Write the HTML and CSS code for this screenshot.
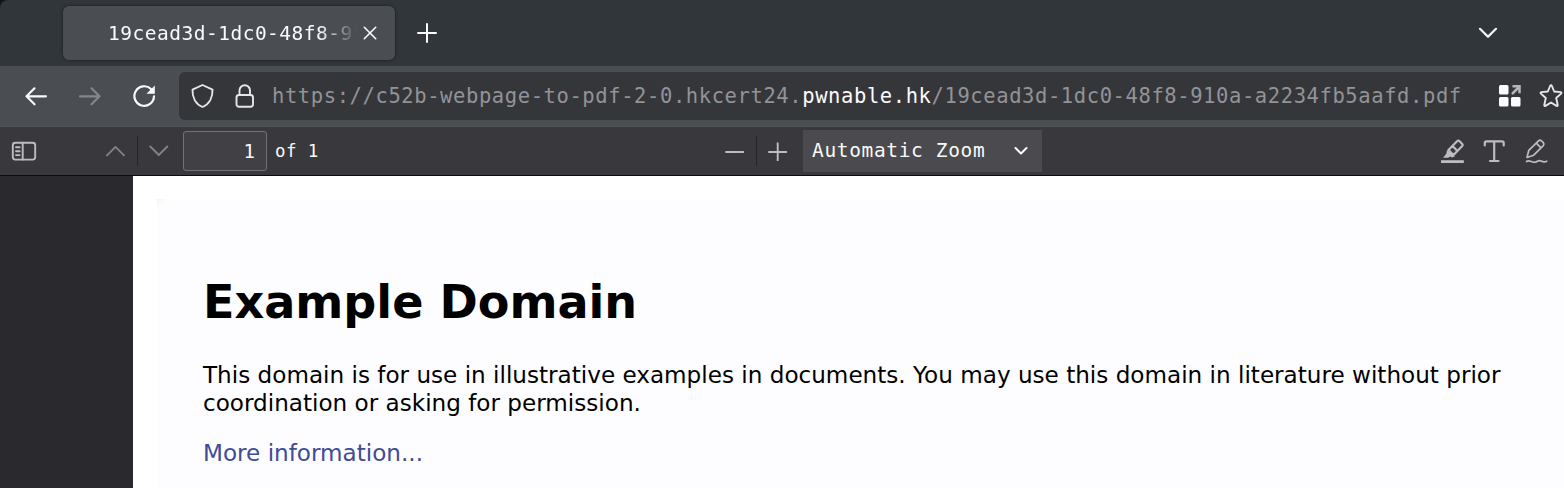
FILE: index.html
```html
<!DOCTYPE html>
<html lang="en">
<head>
<meta charset="utf-8">
<title>19cead3d-1dc0-48f8-910a-a2234fb5aafd.pdf</title>
<link rel="stylesheet" href="styles.css">
</head>
<body>
<div class="tabbar">
  <div class="tab">
    <span class="tab-title">19cead3d-1dc0-48f8-91</span>
    <svg class="tab-close" width="16" height="16" viewBox="0 0 16 16"><path d="M2.300 2.300l11.400 11.400M13.700 2.300L2.300 13.700"/></svg>
  </div>
  <svg class="new-tab" width="20" height="20" viewBox="0 0 20 20"><path d="M10 1v18M1 10h18"/></svg>
  <svg class="all-tabs" width="20" height="12" viewBox="0 0 20 12"><path d="M2 1.800l8 8 8-8"/></svg>
</div>
<div class="navbar">
  <svg class="nav-icon back" width="24" height="24" viewBox="0 0 24 24"><path d="M22 12.300H2.500M10.500 4.300l-8 8 8 8"/></svg>
  <svg class="nav-icon forward" width="24" height="24" viewBox="0 0 24 24"><path d="M1 12.300h19.500M12.500 4.300l8 8-8 8"/></svg>
  <svg class="nav-icon reload" width="24" height="24" viewBox="0 0 24 24"><path d="M22 12.300A9.800 9.800 0 1 1 19 5"/><path class="solid" d="M22.800 1.500v8.300h-8.300z"/></svg>
  <div class="urlbar">
    <svg class="shield" width="24" height="26" viewBox="0 0 24 26"><path d="M12.500 2L22.500 6.700C22.800 14 19.500 21 12.500 24 5.500 21 2.200 14 2.500 6.700z"/></svg>
    <svg class="lock" width="20" height="26" viewBox="0 0 20 26"><path d="M4.500 12V7.500a5 5 0 0 1 10.500 0V12"/><rect x="1.500" y="12" width="16.500" height="11.800" rx="2.500"/></svg>
    <span class="url">https://c52b-webpage-to-pdf-2-0.hkcert24.<b>pwnable.hk</b>/19cead3d-1dc0-48f8-910a-a2234fb5aafd.pdf</span>
    <svg class="apps" width="22" height="22" viewBox="0 0 22 22"><rect x="0" y="0" width="9.500" height="9.500" rx="1.500"/><rect x="0" y="12" width="9.500" height="9.500" rx="1.500"/><rect x="12" y="12" width="9.500" height="9.500" rx="1.500"/><path d="M13 9l7-7M13.500 1.300h7v7"/></svg>
    <svg class="star" width="26" height="26" viewBox="0 0 26 26"><path d="M13 2.300q.6 0 .9.700l2.300 5.500 6.500.6q1.300.3.400 1.500l-4.900 4.400 1.500 7q0 1.300-1.200.9L13 19.500l-5.500 3.400q-1.200.4-1.200-.9l1.500-7-4.900-4.400q-.9-1.200.4-1.500l6.500-.6L12.100 3q.3-.7.900-.7z"/></svg>
  </div>
</div>
<div class="pdfbar">
  <svg class="tool sidebar" width="26" height="20" viewBox="0 0 26 20"><rect x="1.800" y="1.800" width="22.400" height="16.800" rx="2.500"/><path d="M11.700 1.800v16.800M5 6.300h3.600M5 10.200h3.600M5 14.100h3.600"/></svg>
  <svg class="tool prev" width="20" height="12" viewBox="0 0 20 12"><path d="M1 10.300L9.500 1.800l8.500 8.500"/></svg>
  <i class="sep sep-page"></i>
  <svg class="tool next" width="20" height="12" viewBox="0 0 20 12"><path d="M1.300 1.500L9.800 10l8.500-8.500"/></svg>
  <span class="page-number">1</span>
  <span class="page-count">of 1</span>
  <svg class="tool minus" width="20" height="20" viewBox="0 0 20 20"><path d="M1 11h17.300"/></svg>
  <i class="sep sep-zoom"></i>
  <svg class="tool plus" width="20" height="20" viewBox="0 0 20 20"><path d="M1 11h17.300M9.700 2.300v17.400"/></svg>
  <div class="zoom"><span>Automatic Zoom</span><svg width="14" height="9" viewBox="0 0 14 9"><path d="M1.500 2L7 7.500 12.500 2"/></svg></div>
  <div class="editors">
    <svg class="tool" width="24" height="26" viewBox="0 0 24 26"><path class="fill" d="M1 22.200h22.800V25H1z"/><path class="fill" d="M7 12l8 6.300-3 1.200-1.800-1-2 1.200H3l3.300-4z"/><path class="marker" d="M8.500 12L17 3.300q1.300-1.200 2.600 0l2.400 2.400q1.200 1.300 0 2.600L13.500 17zM12.500 8l5 5"/></svg>
    <svg class="tool" width="22" height="26" viewBox="0 0 22 26"><path class="letter" d="M1.800 7.500V5q0-1.700 1.700-1.700h15.500q1.700 0 1.700 1.700v2.500M11.200 3.300V23M7 23h8.500"/></svg>
    <svg class="tool" width="24" height="26" viewBox="0 0 24 26"><path class="thin" d="M4.800 12.300L14.500 2.800q1.500-1.200 3 0l1.800 1.800q1.200 1.500 0 3L9.700 17.200 3 19.500zM12.300 5.200l4.500 4.500M2.500 23.500c3-2.200 5.500 1.500 8.500.7s3.500-2.500 6-1.200 3.500 1.500 5.700.2"/></svg>
  </div>
</div>
<div class="viewer">
  <div class="page">
    <div class="sheet">
      <h1>Example Domain</h1>
      <p>This domain is for use in illustrative examples in documents. You may use this domain in literature without prior<br>coordination or asking for permission.</p>
      <p><a class="more">More information...</a></p>
    </div>
  </div>
</div>
</body>
</html>
```
FILE: styles.css
```css
* { box-sizing: border-box; }
body {
  margin: 0;
  width: 1564px;
  height: 488px;
  overflow: hidden;
  display: flex;
  flex-direction: column;
  background: #111416;
  font-family: "DejaVu Sans Mono", "Liberation Mono", monospace;
}
svg { flex: none; fill: none; stroke: #fbfbfe; stroke-width: 2; stroke-linecap: round; stroke-linejoin: round; }

.tabbar {
  height: 66px;
  flex: none;
  display: flex;
  align-items: center;
  padding-left: 63px;
  background: #31363a;
  border-top-left-radius: 8px;
}
.tab {
  display: flex;
  align-items: center;
  width: 332px;
  height: 54px;
  padding-left: 45px;
  border-radius: 6px;
  background: #4a4d51;
  box-shadow: 0 0 3px rgba(0, 0, 0, .55);
}
.tab-title {
  width: 248px;
  white-space: nowrap;
  color: #fbfbfe;
  font-size: 19.500px;
  letter-spacing: .5px;
  -webkit-mask-image: linear-gradient(to right, #000 210px, transparent 250px);
  mask-image: linear-gradient(to right, #000 210px, transparent 250px);
}
.tab-close { margin-left: 6px; stroke-width: 1.600; }
.new-tab { margin-left: 22px; }
.all-tabs { margin-left: auto; margin-right: 66px; stroke-width: 2.200; }

.navbar {
  height: 60px;
  flex: none;
  display: flex;
  align-items: center;
  padding-left: 24px;
  background: #4a4d51;
}
.nav-icon { stroke-width: 2.200; }
.forward { margin-left: 31px; stroke: #85878a; }
.reload { margin-left: 29px; }
.reload .solid { fill: #fbfbfe; stroke: none; }
.urlbar {
  flex: 1;
  min-width: 0;
  height: 48px;
  margin-left: 23px;
  padding-left: 11px;
  display: flex;
  align-items: center;
  overflow: hidden;
  border-radius: 6px 0 0 6px;
  background: #35363a;
}
.shield, .lock, .star { stroke-width: 1.900; stroke: #e6e6e8; }
.lock { margin-left: 21px; }
.url {
  flex: none;
  width: 1210px;
  margin-left: 17px;
  white-space: nowrap;
  color: #929397;
  font-size: 20.500px;
  letter-spacing: .59px;
}
.url b { font-weight: 400; color: #fbfbfe; }
.apps { margin-left: 17px; }
.apps rect { fill: #fbfbfe; stroke: none; }
.apps path { stroke: #b5b5b8; stroke-width: 2.500; stroke-linecap: butt; stroke-linejoin: miter; }
.star { margin-left: 17px; }

.pdfbar {
  height: 50px;
  flex: none;
  display: flex;
  align-items: center;
  padding-left: 11px;
  background: #38383d;
  border-top: 1px solid #515558;
  border-bottom: 1px solid #0c0c0d;
  color: #f9f9fa;
}
.tool { stroke: #bdbdc0; stroke-width: 1.900; }
.tool .fill { fill: #bdbdc0; stroke: none; }
.tool .thin { stroke-width: 1.700; }
.tool .marker, .tool .letter { stroke-width: 2.200; }
.prev { margin-left: 69px; }
.prev, .next { stroke: #828286; }
.sep { width: 1px; height: 30px; background: #242428; }
.sep-page { margin-left: 11px; }
.next { margin-left: 11px; }
.page-number {
  width: 84px;
  height: 40px;
  margin-left: 14px;
  padding-right: 11px;
  border: 1px solid #737377;
  border-radius: 3px;
  background: #414145;
  font-size: 19px;
  line-height: 38px;
  text-align: right;
}
.page-count { width: 60px; margin-left: 8px; font-size: 17.500px; letter-spacing: .4px; }
.minus { margin-left: 390px; }
.sep-zoom { margin-left: 11px; }
.plus { margin-left: 11px; }
.zoom {
  width: 239px;
  height: 42px;
  margin-left: 15px;
  padding: 0 14px 1px 9px;
  display: flex;
  align-items: center;
  justify-content: space-between;
  background: #4a4a4f;
  font-size: 19.500px;
  letter-spacing: .64px;
}
.editors { display: flex; gap: 19px; margin-left: auto; margin-right: 16px; }

.viewer { flex: 1; min-height: 0; padding-left: 133px; background: #2a2a2e; }
.page { height: 100%; padding: 23px 0 0 24px; background: #fff; overflow: hidden; }
.sheet {
  height: 100%;
  padding: 76px 0 0 46px;
  background: linear-gradient(135deg, #f2f2f3, #fdfdff 7px);
  font-family: "DejaVu Sans", sans-serif;
  font-size: 23.110px;
  line-height: 28px;
  white-space: nowrap;
  color: #000;
}
h1 { margin: 0 0 32px; font-size: 46.100px; line-height: 54px; }
p { margin: 0 0 22px; }
.more { color: #414b93; }
```
